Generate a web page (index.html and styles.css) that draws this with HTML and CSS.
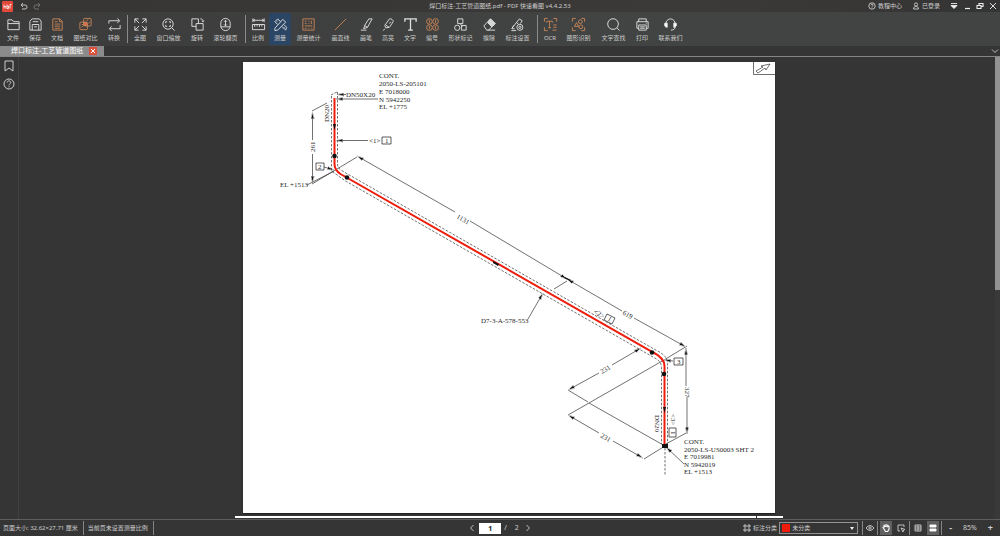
FILE: index.html
```html
<!DOCTYPE html>
<html lang="zh-CN">
<head>
<meta charset="utf-8">
<title>焊口标注-工艺管道图纸.pdf - PDF 快速看图</title>
<link rel="stylesheet" href="styles.css">
</head>
<body>
<div class="app">
  <header class="titlebar">
    <div class="title-left">
      <svg class="logo" viewBox="0 0 11 11"><rect width="11" height="11" rx="1" fill="#e2493b"/><path d="M2 3.500v4M2 5.500h2v2M5 3.500v4M5 5h1.500v2.500H5M8 7.500v-4h1.500" fill="none" stroke="#fff" stroke-width=".8"/></svg>
      <button class="plain" aria-label="撤销"><svg class="i8" viewBox="0 0 8 8"><path d="M3 1 1 3l2 2M1 3h4a2 2 0 0 1 0 4H2"/></svg></button>
      <button class="plain dim" aria-label="重做"><svg class="i8" viewBox="0 0 8 8"><path d="m5 1 2 2-2 2M7 3H3a2 2 0 0 0 0 4h3"/></svg></button>
    </div>
    <h1 class="title">焊口标注-工艺管道图纸.pdf - PDF 快速看图 v4.4.2.53</h1>
    <div class="title-right">
      <button class="plain account"><svg class="i8" viewBox="0 0 8 8"><circle cx="4" cy="4" r="3.200"/><path d="M3 3.200c0-1.500 2-1.500 2 0 0 .7-1 .7-1 1.500M4 5.500v.6"/></svg>教程中心</button>
      <button class="plain account"><svg class="i8" viewBox="0 0 8 8"><circle cx="4" cy="2.500" r="1.600"/><path d="M1.500 7c0-3.500 5-3.500 5 0z"/></svg>已登录</button>
      <div class="window-buttons">
        <button class="plain" aria-label="菜单"><svg class="i8" viewBox="0 0 8 8"><path d="M1 1.500h6"/><path d="M1 3.500h6L4 6.500z" fill="currentColor"/></svg></button>
        <button class="plain" aria-label="最小化"><svg class="i8" viewBox="0 0 8 8"><path d="M2 6.500h5" stroke-width="1.200"/></svg></button>
        <button class="plain" aria-label="还原"><svg class="i8" viewBox="0 0 8 8"><path d="M1 3.500h4v3H1zM3 3V1.500h4v3H5.500" stroke-width="1.100"/></svg></button>
        <button class="plain" aria-label="关闭"><svg class="i8" viewBox="0 0 8 8"><path d="m1 1 6 6M7 1 1 7"/></svg></button>
      </div>
    </div>
  </header>

  <nav class="toolbar" aria-label="工具栏">
    <button class="tool"><svg viewBox="0 0 16 16"><path d="M2 13.500V3h4.500l1.500 2h6v8.500zM2 7h12"/></svg>文件</button>
    <button class="tool"><svg viewBox="0 0 16 16"><path d="M2 4.500 4.500 2H12l2 2.500V14H2zM4.500 14V8h7v6M5 5h6M6.500 10.500h3"/></svg>保存</button>
    <button class="tool"><svg class="orange" viewBox="0 0 16 16"><path d="M3 2h7.500L13 4.500V14H3zM10 2v3h3M5 5h3M5 7.500h6M5 9.700h6M5 12h6"/></svg>文档</button>
    <button class="tool wide"><svg class="orange" viewBox="0 0 16 16"><rect x="6" y="1.500" width="8" height="8" rx="1"/><rect x="2" y="5.500" width="8" height="8" rx="1"/><path d="M6.500 6h3v3h-3z" fill="#ef6345"/><path d="M9 4l2-1M11 7l2-2M4 11l2-2M4 8h2"/></svg>图纸对比</button>
    <button class="tool"><svg viewBox="0 0 16 16"><path d="M2 7V4h11M11 1.500 13.500 4 11 6.500M14 8.500v4H3M5 10l-2.500 2.500L5 15"/></svg>转换</button>
    <span class="divider"></span>
    <button class="tool"><svg viewBox="0 0 16 16"><path d="M2 6V2h4M2 2l4.500 4.500M10 2h4v4M14 2 9.500 6.500M2 10v4h4M2 14l4.500-4.500M14 10v4h-4M14 14 9.500 9.500"/></svg>全图</button>
    <button class="tool wide"><svg viewBox="0 0 16 16"><circle cx="7.500" cy="7.500" r="5.500"/><path d="m11.500 11.500 3 3M5 6.500V5h1.500M8.500 5H10v1.500M10 8.500V10H8.500M6.500 10H5V8.500"/></svg>窗口缩放</button>
    <button class="tool"><svg viewBox="0 0 16 16"><path d="M6.500 10H2V2h7v5M6.500 7h7.500v7H6.500zM11 2c2 0 3 1 3 3M12.700 4 14 5.200 15 4"/></svg>旋转</button>
    <button class="tool wide"><svg viewBox="0 0 16 16"><rect x="3" y="1.500" width="10" height="13" rx="5"/><path d="M8 3.500v6M6.500 5 8 3.500 9.500 5M6.500 8 8 9.500 9.500 8M3 10.500h10"/></svg>滚轮翻页</button>
    <span class="divider"></span>
    <button class="tool"><svg viewBox="0 0 16 16"><path d="M2 1.500v4M14 1.500v4M2 3.500h12M4 2.300 2.500 3.500 4 4.700M12 2.300l1.500 1.200L12 4.700M1.500 8h13v5.500h-13zM4 8v2.500M6.500 8v2M9 8v2.500M11.500 8v2"/></svg>比例</button>
    <button class="tool active" aria-pressed="true"><svg viewBox="0 0 16 16"><path d="m2 12 8.500-9.500 3 3L5 14l-3 .5zM2 5l3-3 3 3M2 5l3 3M9.500 10l4 4 1-3-3-3M4 5l1-1M11 12l1-1"/></svg>测量</button>
    <button class="tool wide"><svg class="orange" viewBox="0 0 16 16"><path d="M2 2h12v12H2zM4 4.500h2M4 7h2M8 4.500h1M11 4v3.500M4 9.500h8M4 12h2M8 12h1M11 12h1M8 7h1"/></svg>测量统计</button>
    <button class="tool medium"><svg class="orange" viewBox="0 0 16 16"><path d="M2 14 14 2"/></svg>画直线</button>
    <button class="tool"><svg viewBox="0 0 16 16"><path d="M10.500 2h3.500L9 11l-4 1.500L6 9zM6 9l3 2M2 14h6"/></svg>画笔</button>
    <button class="tool"><svg viewBox="0 0 16 16"><path d="m4 9 5-7c2-.5 4 1 4 3l-4 6-4 .5zM5 8.500l3.500 2.500M9 7l1.500-2M4 12.500l-1.500 2"/></svg>高亮</button>
    <button class="tool"><svg viewBox="0 0 16 16"><path d="M2 5V2h12v3M8 2v12M5.500 14h5" stroke-width="1.400"/></svg>文字</button>
    <button class="tool"><svg class="orange" viewBox="0 0 16 16"><circle cx="4.700" cy="4.700" r="3"/><circle cx="11.300" cy="4.700" r="3"/><circle cx="4.700" cy="11.300" r="3"/><circle cx="11.300" cy="11.300" r="3"/><path d="M4.700 3v3.400M11.300 3v3.400M4.700 9.600V13M11.300 9.600V13"/></svg>编号</button>
    <button class="tool wide"><svg viewBox="0 0 16 16"><path d="M5 2h5.500v5H5z"/><circle cx="4.500" cy="11.500" r="2.800"/><path d="M9 9h5v5H9zM8 7.500l2 3"/></svg>形状标记</button>
    <button class="tool"><svg viewBox="0 0 16 16"><path d="m2 9.500 7-7.500 5 5-7 7H5zM6 14h8"/><path d="m6 6 3-4 5 5-3.500 3.500z" fill="#d5d5d5"/></svg>擦除</button>
    <button class="tool wide"><svg viewBox="0 0 16 16"><path d="m2 12 8-10 3 2-2 3M5 12.500H2L4 9M1.500 14.500h5M7 6l2 1.500"/><circle cx="10.500" cy="11" r="3.200"/><circle cx="10.500" cy="11" r="1.200"/></svg>标注设置</button>
    <span class="divider"></span>
    <button class="tool"><svg class="orange" viewBox="0 0 16 16"><path d="M1.500 5V1.500H5M11 1.500h3.500V5M1.500 11v3.500H5M4 6V4.500h6V6M7 4.500v7M5.500 11.500h3M11 8.500h3.500M11 11h3.500M10 14h4.500"/></svg>OCR</button>
    <button class="tool wide"><svg class="orange" viewBox="0 0 16 16"><path d="M1.500 5V1.500H5M11 1.500h3.500V5M1.500 11v3.500H5M11 14.500h3.500V11M3.500 10 6 6l2 4z"/><circle cx="10" cy="5" r="2"/><circle cx="10.500" cy="10.500" r="2"/></svg>图形识别</button>
    <button class="tool wide"><svg viewBox="0 0 16 16"><circle cx="7.500" cy="7.500" r="5.700"/><path d="m11.500 11.500 3 3"/></svg>文字查找</button>
    <button class="tool"><svg viewBox="0 0 16 16"><path d="M4 5V2h8v3M4 12H2V5h12v7h-2M4 8.500h8V14H4zM5.500 10.500h5M5.500 12h5M11.500 6.700h1"/></svg>打印</button>
    <button class="tool wide"><svg viewBox="0 0 16 16"><path d="M3 8c0-8 10-8 10 0M13 10c0 3-2 4-4.500 4"/><path d="M2 6.500h2.500V11C2 11 1 9 2 6.500zM14 6.500h-2.500V11c2.500 0 3.500-2 2.500-4.500z" fill="#fff"/></svg>联系我们</button>
  </nav>

  <div class="tabs">
    <div class="tab"><span>焊口标注-工艺管道图纸</span><button class="tab-close" aria-label="关闭标签"><svg viewBox="0 0 8 8"><path d="m2 2 4 4M6 2 2 6"/></svg></button></div>
    <button class="plain" aria-label="展开标签"><svg class="i8" viewBox="0 0 8 8"><path d="m1 2.500 3 3 3-3"/></svg></button>
  </div>

  <main class="workspace">
    <aside class="rail">
      <button class="plain" aria-label="书签"><svg class="i12" viewBox="0 0 12 12"><path d="M2 1h8v10L6 8l-4 3z"/></svg></button>
      <button class="plain" aria-label="帮助"><svg class="i12" viewBox="0 0 12 12"><circle cx="6" cy="6" r="5"/><path d="M4.200 4.500c.2-2.300 3.600-2 3.600 0C7.800 6 6 5.800 6 7.300M6 8.300v1"/></svg></button>
    </aside>
    <div class="canvas">
      <svg class="page" viewBox="243 62 532 451" role="img" aria-label="管道轴测图">
        <defs>
          <marker id="arrow" viewBox="0 0 8 4" refX="8" refY="2" markerWidth="7" markerHeight="4" markerUnits="userSpaceOnUse" orient="auto-start-reverse"><path d="M0 0 8 2 0 4z" fill="#111"/></marker>
        </defs>
        <g class="frame"><path d="M753.500 62v12.500H775"/><path d="m756 71 7-4-2-1 9-2-4 6-1-2-7 5z"/></g>
        <g class="thin">
          <path d="M312 111l15-8M312 184l45-27M554 289l13-8M664 360l23-14M664 445l24-13"/>
          <path d="M664 360l-75 43M589 403l76 43M568 390l20 12M568 415l21-12M644 459l21-13"/>
        </g>
        <g class="dimension">
          <path d="M312.500 140v-28" marker-end="url(#arrow)"/><path d="M312.500 154v29" marker-end="url(#arrow)"/>
          <path d="M455 212 357 156" marker-end="url(#arrow)"/><path d="M470 221l97 58" marker-end="url(#arrow)"/>
          <path d="M622 311l-55-32" marker-end="url(#arrow)"/><path d="M634 318l52 29" marker-end="url(#arrow)"/>
          <path d="M686 386v-38" marker-end="url(#arrow)"/><path d="M687 397v37" marker-end="url(#arrow)"/>
          <path d="M612 365l29-17" marker-end="url(#arrow)"/><path d="M599 373l-31 17" marker-end="url(#arrow)"/>
          <path d="M599 433l-31-18" marker-end="url(#arrow)"/><path d="M613 441l30 17" marker-end="url(#arrow)"/>
          <path d="M346 94.500h-9" marker-end="url(#arrow)"/><path d="M378 99h-42" marker-end="url(#arrow)"/>
          <path d="M368 140.500h-32" marker-end="url(#arrow)"/><path d="M324 167l10 3" marker-end="url(#arrow)"/>
          <path d="M528 319l15-26" marker-end="url(#arrow)"/><path d="M673 361l-9-1" marker-end="url(#arrow)"/>
          <path d="M684 464l-18-17" marker-end="url(#arrow)"/><path d="M307 185l27-14"/>
        </g>
        <g class="sleeve"><path d="M331.500 96v75l14 10 311 178q5 3 5 9v76"/><path d="M337.500 92v72q0 4 4 6.500l315 180q11 5 11 13v81"/><path d="M331 95l6-3M665 448v28"/></g>
        <path class="pipe" d="M334.500 98v66q0 6 6 10l312 178q12 6 12 14v80"/>
        <g class="joints"><circle cx="334.500" cy="156" r="2.300"/><circle cx="347" cy="177.500" r="2.300"/><circle cx="652" cy="352.500" r="2.300"/><circle cx="664" cy="374" r="2.300"/><path d="M662 444h6v4h-6zM333 124h3l-1.500 6zM493 261l6 3-1 2-5-3zM663 407h3l-1.500 6zM565 277l6 3-1 1-6-3z"/></g>
        <g class="tags"><path d="M382 137h9v7h-9zM316 163h8v7h-8zM674 358h9v7h-9zM669 428h7v9h-7z"/><path d="m607 314 8 4-3 6-8-4z"/></g>
        <g class="drawing-text">
          <text x="379" y="78">CONT.</text><text x="379" y="86">2050-LS-205101</text><text x="379" y="94">E 7018000</text><text x="379" y="102">N 5942250</text><text x="379" y="109">EL +1775</text>
          <text x="346" y="97">DN50X20</text><text x="369" y="143">&lt;1&gt;</text><text x="385" y="143">1</text><text x="318" y="169">2</text><text x="280" y="187">EL +1513</text>
          <text x="481" y="323">D7-3-A-578-553</text><text x="677" y="364">3</text>
          <text transform="translate(329 122) rotate(-90)">DN20</text><text transform="translate(315 152) rotate(-90)">261</text>
          <text transform="translate(456 218) rotate(30)">1131</text><text transform="translate(622 314) rotate(30)">619</text>
          <text transform="translate(593 313) rotate(30)">&lt;2&gt;</text><text transform="translate(607 320) rotate(30)">1</text>
          <text transform="translate(602 374) rotate(-30)">231</text><text transform="translate(600 437) rotate(30)">231</text>
          <text transform="translate(685 387) rotate(90)">327</text><text transform="translate(655 415) rotate(90)">DN20</text><text transform="translate(671 414) rotate(90)">&lt;3&gt;</text><text transform="translate(671 431) rotate(90)">1</text>
          <text x="684" y="444">CONT.</text><text x="684" y="452">2050-LS-US0003 SHT 2</text><text x="684" y="459">E 7019981</text><text x="684" y="467">N 5942019</text><text x="684" y="474">EL +1513</text>
        </g>
      </svg>
      <div class="next-page"></div>
    </div>
    <div class="scrollbar"><div class="thumb"></div></div>
  </main>

  <footer class="statusbar">
    <div class="status-left"><span class="status-cell">页面大小: 32.62×27.71 厘米</span><span class="status-cell">当前页未设置测量比例</span></div>
    <div class="pager">
      <button class="plain" aria-label="上一页"><svg class="i8" viewBox="0 0 8 8"><path d="M5.500 1 2.500 4l3 3"/></svg></button>
      <input class="page-number" type="text" value="1" aria-label="页码"><span>/</span><span class="page-total">2</span>
      <button class="plain" aria-label="下一页"><svg class="i8" viewBox="0 0 8 8"><path d="m2.500 1 3 3-3 3"/></svg></button>
    </div>
    <div class="status-right">
      <label class="category-label" for="category"><svg class="i8" viewBox="0 0 8 8"><path d="M1 1h2v2H1zM5 1h2v2H5zM1 5h2v2H1zM5 5h2v2H5z"/></svg>标注分类</label>
      <div class="category"><span class="swatch"></span><select id="category"><option>未分类</option></select><svg class="caret" viewBox="0 0 4 3"><path d="M0 0h4L2 3z" fill="#eee" stroke="none"/></svg></div>
      <div class="status-group single"><button class="status-button" aria-label="显示"><svg class="i8" viewBox="0 0 8 8"><path d="M0 4q4-5 8 0-4 5-8 0z"/><circle cx="4" cy="4" r="1.200"/></svg></button></div>
      <div class="status-group"><button class="status-button pressed" aria-label="抓手"><svg class="i8" viewBox="0 0 8 8"><path d="M2 5 1 3.500 2 3V1.500L3.500 1l1-.2L6 1.500l1 1v3L5.500 7.500h-2zM2 3q2-1.500 4 0" stroke-width="1.100"/></svg></button><button class="status-button" aria-label="选择"><svg class="i8" viewBox="0 0 8 8"><path d="M7 3V1H1v6h2M4 4l4 1.500-1.500.5L6 8z"/></svg></button></div>
      <div class="status-group"><button class="status-button" aria-label="双页"><svg class="i8" viewBox="0 0 8 8"><path d="M1 1h6v6H1zM4 1v6M1 3h6M1 5h6"/></svg></button><button class="status-button pressed" aria-label="连续"><svg class="i8" viewBox="0 0 8 8"><path d="M1 1h6v2H1zM1 5h6v2H1z" fill="currentColor"/></svg></button></div>
      <div class="zoom"><button class="plain" aria-label="缩小">-</button><span>85%</span><button class="plain" aria-label="放大">+</button></div>
    </div>
  </footer>
</div>
</body>
</html>
```
FILE: styles.css
```css
* { box-sizing: border-box; }
body {
  margin: 0;
  background: #353535;
  color: #cdcdcd;
  font: 6px/8px "Noto Sans", "Noto Sans CJK SC", sans-serif;
}
button, input, select { font: inherit; color: inherit; border: 0; margin: 0; padding: 0; }
button { background: none; }
svg { display: block; fill: none; stroke: currentColor; stroke-width: 1; }
.app { display: flex; flex-direction: column; height: 100vh; overflow: hidden; }
.plain { display: flex; align-items: center; gap: 2px; }
.dim { color: #777; }
.i8 { width: 8px; height: 8px; stroke-width: .9; }
.i12 { width: 12px; height: 12px; }

.titlebar {
  flex: 0 0 12px;
  display: grid;
  grid-template-columns: 1fr auto 1fr;
  align-items: center;
  background: linear-gradient(90deg, #373534, #3c3a38 70%, #343434);
}
.title-left { display: flex; align-items: center; gap: 5px; padding-left: 2px; }
.logo { width: 11px; height: 11px; stroke: none; margin-right: 2px; }
.title { margin: 0; font-size: 6px; font-weight: 400; }
.title-right { display: flex; justify-content: flex-end; align-items: center; gap: 10px; padding-right: 3px; }
.window-buttons { display: flex; gap: 5px; color: #eee; }

.toolbar {
  flex: 0 0 34px;
  display: flex;
  align-items: center;
  padding: 1px 2px;
  background: linear-gradient(90deg, #3b3b3b, #424443 60%, #414443);
}
.tool {
  width: 22px;
  height: 32px;
  flex: none;
  display: flex;
  flex-direction: column;
  align-items: center;
  justify-content: center;
  gap: 2px;
  white-space: nowrap;
  border-radius: 2px;
}
.tool svg { width: 15px; height: 15px; color: #dedede; }
.tool svg.orange { color: #c58458; }
.medium { width: 29px; }
.wide { width: 35px; }
.active { background: #2b4565; }
.divider { flex: none; width: 1px; height: 28px; margin: 0 1px 0 2px; background: #8b8b8b; }

.tabs {
  flex: 0 0 11px;
  display: flex;
  justify-content: space-between;
  border-bottom: 1px solid #858585;
  padding-right: 1px;
}
.tab { display: flex; align-items: center; gap: 6px; padding: 0 7px 0 11px; background: #8b8b8b; color: #fff; font-size: 7px; }
.tab-close { width: 8px; height: 8px; background: #dc503e; color: #fff; }
.tab-close svg { width: 8px; height: 8px; }

.workspace { flex: 1; min-height: 0; display: flex; }
.rail { flex: none; width: 19px; display: flex; flex-direction: column; align-items: center; gap: 6px; padding-top: 3px; border-right: 1px solid #404040; }
.canvas { flex: 1; min-width: 0; display: flex; flex-direction: column; align-items: center; gap: 3px; padding: 5px 0 0 4px; overflow: hidden; }
.page { flex: none; width: 532px; max-width: 100%; background: #fff; box-shadow: 0 1px 1px #222; }
.next-page { flex: none; width: 548px; max-width: 100%; height: 2px; background: linear-gradient(90deg, #fff 95%, #333 95% 95.3%, #fff 95.3%); }
.scrollbar { flex: none; width: 5px; background: #393939; }
.thumb { height: 50.5%; background: #929292; }

.frame, .thin, .dimension { stroke: #333; stroke-width: .7; }
.sleeve { stroke: #333; stroke-width: .7; stroke-dasharray: 2.500 1.500; }
.pipe { stroke: #ed1c0c; stroke-width: 2; }
.joints { fill: #111; stroke: none; }
.tags { stroke: #333; stroke-width: .8; }
.drawing-text { fill: #292929; stroke: none; font: 7px "Liberation Serif", serif; }

.statusbar {
  flex: 0 0 17px;
  display: grid;
  grid-template-columns: 1fr auto 1fr;
  align-items: center;
  border-top: 1px solid #5e5e5e;
  background: #353535;
}
.status-left, .status-right, .pager, .status-group, .zoom, .category, .category-label { display: flex; align-items: center; }
.status-cell { padding: 3px 5px 3px 3px; border-right: 1px solid #858585; white-space: nowrap; }
.status-cell + .status-cell { padding-left: 4px; }
.pager { gap: 3px; font-size: 7px; }
.page-number { width: 22px; height: 11px; background: #fff; color: #222; text-align: center; font-weight: 700; }
.page-total { padding: 0 2px 0 5px; }
.status-right { justify-content: flex-end; }
.category-label { gap: 2px; padding-right: 2px; white-space: nowrap; }
.category { width: 79px; height: 12px; margin-right: 4px; padding: 0 3px 0 2px; border: 1px solid #929292; }
.swatch { width: 8px; height: 8px; background: #ef1b0c; }
.category select { flex: 1; min-width: 0; height: 8px; padding-left: 2px; appearance: none; background: transparent; }
.caret { width: 4px; height: 3px; }
.status-group { gap: 3px; padding: 0 2px; border-left: 1px solid #858585; }
.single { padding: 0 1px; }
.status-button { width: 12px; height: 14px; display: flex; align-items: center; justify-content: center; }
.pressed { background: #606060; color: #fff; }
.zoom { gap: 11px; padding: 3px 7px; border-left: 1px solid #858585; font-size: 7px; }
.zoom button { font-size: 9px; font-weight: 700; }
```
